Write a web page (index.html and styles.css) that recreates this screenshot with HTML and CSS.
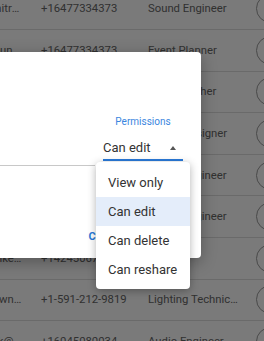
FILE: index.html
```html
<!DOCTYPE html>
<html lang="en">
<head>
<meta charset="UTF-8">
<meta name="viewport" content="width=device-width, initial-scale=1.0">
<title>Crew Contacts - Share</title>
<link rel="stylesheet" href="styles.css">
</head>
<body>
<div class="table">
    <div class="row">
        <div class="cell email">events.crew.dimitri@gmail.com</div>
        <div class="cell phone">+16477334373</div>
        <div class="cell role">Sound Engineer</div>
        <div class="avatar"></div>
    </div>
    <div class="row">
        <div class="cell email">stage.one.calhoun@gmail.com</div>
        <div class="cell phone">+16477334373</div>
        <div class="cell role">Event Planner</div>
        <div class="avatar"></div>
    </div>
    <div class="row">
        <div class="cell email">lena.ortiz.photo@gmail.com</div>
        <div class="cell phone">+16473120054</div>
        <div class="cell role">Photographer</div>
        <div class="avatar"></div>
    </div>
    <div class="row">
        <div class="cell email">sam.wu.design@gmail.com</div>
        <div class="cell phone">+16475519932</div>
        <div class="cell role">Sound Designer</div>
        <div class="avatar"></div>
    </div>
    <div class="row">
        <div class="cell email">tom.reyes.audio@gmail.com</div>
        <div class="cell phone">+14165507721</div>
        <div class="cell role">Sound Engineer</div>
        <div class="avatar"></div>
    </div>
    <div class="row">
        <div class="cell email">jo.nash.sound@gmail.com</div>
        <div class="cell phone">+14168803410</div>
        <div class="cell role">Sound Engineer</div>
        <div class="avatar"></div>
    </div>
    <div class="row">
        <div class="cell email">events.team.walker@gmail.com</div>
        <div class="cell phone">+14245067188</div>
        <div class="cell role">Rigger</div>
        <div class="avatar"></div>
    </div>
    <div class="row">
        <div class="cell email">events.crew.brown@gmail.com</div>
        <div class="cell phone">+1-591-212-9819</div>
        <div class="cell role">Lighting Technician</div>
        <div class="avatar"></div>
    </div>
    <div class="row">
        <div class="cell email">productions.nick@gmail.com</div>
        <div class="cell phone">+16045080034</div>
        <div class="cell role">Audio Engineer</div>
        <div class="avatar"></div>
    </div>
</div>

<div class="scrim"></div>

<div class="dialog">
    <div class="fields">
        <div class="email-field">Add people by email</div>
        <div class="perm">
            <div class="perm-label">Permissions</div>
            <div class="select">
                <span>Can edit</span>
                <span class="arrow"></span>
            </div>
        </div>
    </div>
    <div class="actions">
        <button class="btn">CANCEL</button>
        <button class="btn">SHARE</button>
    </div>
</div>

<ul class="menu">
    <li>View only</li>
    <li class="selected">Can edit</li>
    <li>Can delete</li>
    <li>Can reshare</li>
</ul>
</body>
</html>
```

FILE: styles.css
```css
body {
    margin: 0;
    width: 264px;
    height: 341px;
    overflow: hidden;
    background: #ffffff;
    font-family: Roboto, "Liberation Sans", sans-serif;
}

.table {
    margin-top: -11.6px;
}

.row {
    display: flex;
    align-items: center;
    height: 41.6px;
    border-bottom: 1px solid #dedede;
    box-sizing: border-box;
    font-size: 11.3px;
    color: #666666;
    white-space: nowrap;
}

.cell {
    overflow: hidden;
    text-overflow: ellipsis;
}

.email {
    width: 102px;
    margin-left: -80px;
    flex-shrink: 0;
}

.phone {
    width: 107px;
    margin-left: 19px;
    flex-shrink: 0;
}

.role {
    width: 92px;
    flex-shrink: 0;
}

.avatar {
    width: 27px;
    height: 27px;
    margin-left: 16px;
    flex-shrink: 0;
    border: 1px solid #9a9a9a;
    border-radius: 50%;
}

.scrim {
    position: absolute;
    inset: 0;
    background: rgba(0, 0, 0, 0.52);
}

.dialog {
    position: absolute;
    left: -180px;
    top: 52px;
    width: 381px;
    height: 206px;
    display: flex;
    flex-direction: column;
    background: #ffffff;
    border-radius: 4px;
    box-shadow: 0 4px 16px rgba(0, 0, 0, 0.3);
}

.fields {
    display: flex;
    margin-top: 64px;
    padding: 0 18px 0 24px;
}

.email-field {
    flex: 1;
    height: 22px;
    padding-top: 27px;
    border-bottom: 1px solid #c8c8c8;
    color: #9e9e9e;
    font-size: 13px;
    line-height: 18px;
}

.perm {
    width: 80px;
    margin-left: 8px;
}

.perm-label {
    height: 12px;
    font-size: 10px;
    line-height: 12px;
    text-align: center;
    color: #3a86e0;
}

.select {
    display: flex;
    align-items: center;
    justify-content: space-between;
    margin-top: 12px;
    height: 16px;
    padding-bottom: 3px;
    border-bottom: 2px solid #2a7ad9;
    font-size: 13px;
    line-height: 16px;
    color: #333333;
}

.arrow {
    width: 0;
    height: 0;
    margin-right: 7px;
    border-left: 3.5px solid transparent;
    border-right: 3.5px solid transparent;
    border-bottom: 4px solid #555555;
}

.actions {
    display: flex;
    justify-content: flex-end;
    gap: 12px;
    margin-top: auto;
    padding: 0 18px 13px;
}

.btn {
    padding: 0;
    border: none;
    background: none;
    font-family: Roboto, "Liberation Sans", sans-serif;
    font-size: 11px;
    font-weight: bold;
    letter-spacing: 0.5px;
    line-height: 16px;
    color: #2a7ad9;
}

.menu {
    position: absolute;
    left: 96px;
    top: 162px;
    width: 94px;
    margin: 0;
    padding: 6px 0 5px;
    list-style: none;
    background: #ffffff;
    border-radius: 4px;
    box-shadow: 0 2px 8px rgba(0, 0, 0, 0.3);
}

.menu li {
    height: 29px;
    padding: 0 12px;
    font-size: 13px;
    line-height: 29px;
    color: #333333;
}

.menu li.selected {
    background: #e4edfa;
}
```
